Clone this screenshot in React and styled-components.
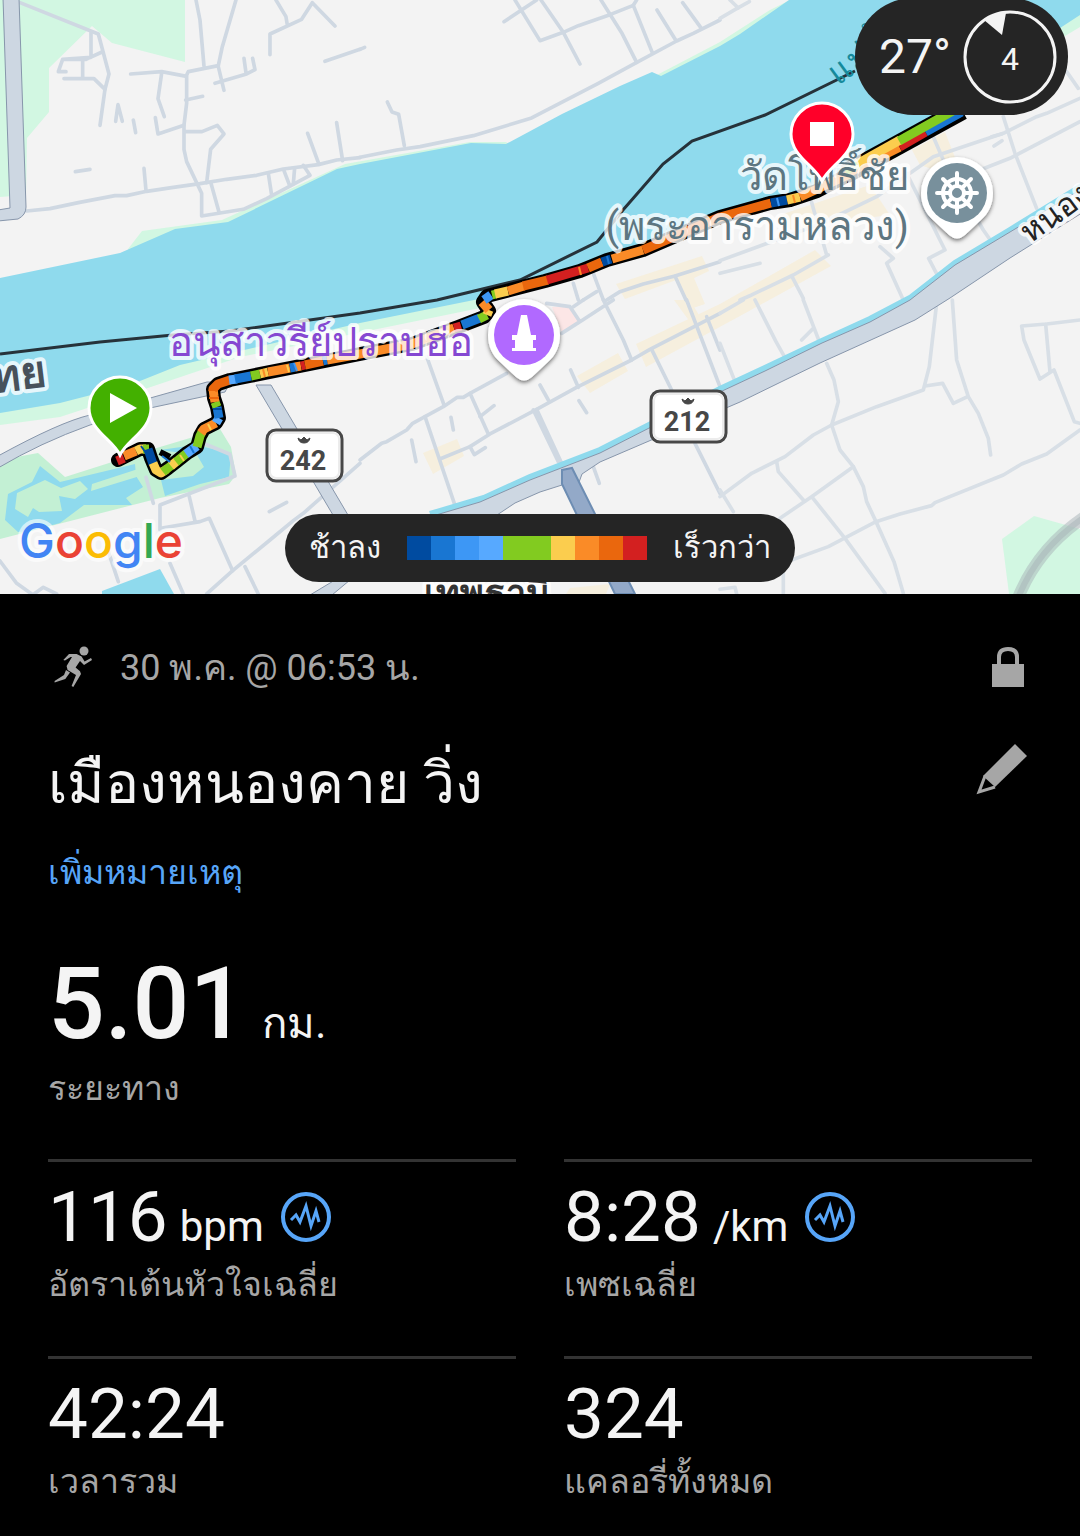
import React from "react";
import styled, { createGlobalStyle } from "styled-components";

const GlobalStyle = createGlobalStyle`
  * {
    box-sizing: border-box;
  }

  body {
    margin: 0;
    background: #000;
    color: #f4f4f4;
    font-family: Roboto, "Noto Sans", sans-serif;
  }
`;

const Screen = styled.main`
  min-height: 100vh;
  background: #000;
`;

const MapArea = styled.section`
  position: relative;
  overflow: hidden;
`;

const MapCanvas = styled.svg`
  display: block;
  width: 100%;
  height: auto;
`;

const Weather = styled.div`
  position: absolute;
  top: -2px;
  right: 12px;
  display: flex;
  align-items: center;
  gap: 12px;
  height: 117px;
  padding: 0 11px 0 24px;
  border-radius: 60px;
  background: #252525;
  font-size: 48px;
`;

const Legend = styled.div`
  position: absolute;
  bottom: 12px;
  left: 50%;
  transform: translateX(-50%);
  display: flex;
  align-items: center;
  gap: 26px;
  height: 68px;
  padding: 0 24px;
  border-radius: 34px;
  background: #252525;
  font-size: 31px;
  line-height: 68px;
  white-space: nowrap;
`;

const Scale = styled.div`
  display: flex;
`;

const Swatch = styled.span`
  width: ${(props) => (props.$wide ? 48 : 24)}px;
  height: 24px;
  background: ${(props) => props.$color};
`;

const Details = styled.section`
  padding: 38px 48px 32px;
`;

const Row = styled.div`
  display: flex;
  align-items: center;
  justify-content: space-between;
`;

const DateLine = styled.div`
  display: flex;
  align-items: center;
  gap: 24px;
  height: 72px;
  color: #a6a6a6;
  font-size: 36px;
  line-height: 48px;
`;

const Title = styled.h1`
  margin: 0;
  padding-top: 28px;
  font-size: 57px;
  line-height: 104px;
  font-weight: 400;
`;

const IconButton = styled.button`
  display: flex;
  padding: 0;
  border: 0;
  background: none;
  color: #a6a6a6;
  cursor: pointer;
`;

const NoteLink = styled.a`
  display: block;
  color: #57a5f8;
  font-size: 34px;
  line-height: 72px;
  text-decoration: none;
`;

const Distance = styled.div`
  display: flex;
  align-items: baseline;
  gap: 16px;
  margin-top: 36px;
  font-size: 100px;
  line-height: 120px;
  font-weight: 500;
`;

const Unit = styled.span`
  font-size: 42px;
  line-height: 48px;
  font-weight: 400;
`;

const Label = styled.div`
  color: #a6a6a6;
  font-size: 34px;
  line-height: 48px;
`;

const Stats = styled.div`
  display: grid;
  grid-template-columns: 1fr 1fr;
  gap: 48px;
  margin-top: 47px;
`;

const Stat = styled.div`
  padding-top: 12px;
  border-top: 3px solid #333;
`;

const StatValue = styled.div`
  display: flex;
  align-items: baseline;
  gap: 12px;
  font-size: 71px;
  line-height: 86px;
`;

const StatButton = styled(IconButton)`
  align-self: center;
  padding-left: 4px;
  color: #57a5f8;
`;

const PACE_COLORS = [
  "#004ba0", "#1976d2", "#3d97f5", "#57a9ff", "#82cb20",
  "#fbcd4e", "#fa8b27", "#ea670d", "#d32020",
];

const STATS = [
  { value: "116", unit: "bpm", label: "อัตราเต้นหัวใจเฉลี่ย", graph: true },
  { value: "8:28", unit: "/km", label: "เพซเฉลี่ย", graph: true },
  { value: "42:24", label: "เวลารวม" },
  { value: "324", label: "แคลอรี่ทั้งหมด" },
];

// side streets, drawn per map tile at three times the screen scale
const TILES = [
  {
    x: 0,
    y: 0,
    roads: [
      "M60 8L295 102L327 222L315 268L300 376",
      "M273 98V172L188 178L175 215H198M248 180V236M192 236H282L315 268M188 178H258L306 156",
      "M392 222L485 215L560 229V310L552 376V448L560 485L605 580V648L730 628L800 596L930 526L910 496",
      "M485 220L474 296L493 350M466 353L474 402L552 376M557 300L608 289",
      "M554 395H606L652 376L672 402L632 448L620 548",
      "M560 225L565 215L655 197L667 140L708 0M588 0L600 60L612 198",
      "M645 250L740 222L765 209L758 175M732 175L738 218M655 200L672 271",
      "M828 0L858 50L862 75M810 164V102L905 58L937 8L1005 78M975 184L1080 148",
      "M80 633L150 626L235 608L345 587L380 587L440 574L520 562L600 551L680 538L770 526L850 507L955 494L1010 480L1080 473",
      "M347 364L354 314L367 364M400 360L407 398M226 515L270 508M432 505L438 571",
      "M633 550L657 636M805 520L815 585M852 512L868 554M884 504L880 552M923 400L956 490M1010 368L1028 482",
    ],
  },
  {
    x: 360,
    y: 0,
    roads: [
      "M0 472L110 450L180 440L340 407L515 354L715 250L825 190L950 123L1000 100L1080 60",
      "M82 306L96 336L116 343L133 437M0 148L14 142",
      "M465 0L540 122L610 97L655 77L750 44L820 16M432 65L530 0M543 0L610 97L660 192",
      "M723 0L785 98L830 187M830 0L820 16L877 158M891 30L947 120M968 8L1022 82",
      "M640 850L655 900M700 820L730 900M670 900L710 875M740 900L780 875L850 852L945 828L1080 785M945 828L978 900",
    ],
  },
  {
    x: 720,
    y: 0,
    roads: [
      "M0 55L50 26L88 5M30 0L55 24M0 782L300 672L470 590L640 470L850 400L950 350L980 340L1080 295",
      "M850 350L885 460L950 625M640 410L670 480L790 690L825 740M480 740L520 775L500 790L550 900",
      "M560 520L675 750L626 775L665 850M780 510L870 475L1080 365M270 590L320 765M0 820L120 790M60 900L95 885L220 825L325 765M215 828L250 895",
      "M1040 215L1075 265M815 410L845 402M822 438L846 422",
    ],
  },
  {
    x: 0,
    y: 300,
    roads: [
      "M438 532L460 610M480 690V615L705 528L690 463L610 430M568 590L585 663M482 685L600 665L628 655L698 812L620 882M735 800L775 882",
      "M1080 490L910 640L880 662L810 720L698 812M0 783L50 850L95 882M102 882L130 862L170 882M510 790L550 882M320 740L355 845M808 635L860 607",
    ],
  },
  {
    x: 360,
    y: 300,
    roads: [
      "M0 480L65 430L80 425L140 390L158 370L195 350L250 320L292 292H310L330 280L440 220",
      "M200 170L252 315M330 280L385 402M195 350L287 622M245 475L330 440L390 402L530 328L650 262L815 180L870 148L1080 40",
      "M530 328L605 490M520 330L595 485M330 440L343 464L376 443M360 350L402 317M273 352L280 390M155 420L168 485M540 255L565 300M632 210L655 262M657 302L680 338",
      "M560 10L630 20L660 65L605 100M730 0L790 120L815 180M875 148L935 270M980 0L1080 260M1040 50L1080 150M660 65L760 0M640 20L670 0M700 500L718 550M1005 430L1080 580",
    ],
  },
  {
    x: 720,
    y: 300,
    roads: [
      "M0 590L95 520L195 470L280 405L335 375L470 320L610 270L628 200L650 10M615 258L668 250L700 310L743 290",
      "M697 0L710 180L745 290L775 340L805 415L812 465M320 190L342 240L355 305L335 375L360 450L400 500L430 560L440 605L468 665L522 785L550 880",
      "M170 485L175 515L250 600M180 655L275 590L400 500M275 590L375 715L495 880M215 780L325 740L468 665L540 642L635 617L645 608L850 525L905 492L980 462L1080 390",
      "M1080 60L980 72L905 78L912 120L960 237L1002 210L1063 365L1080 370M977 72L990 215M105 0L168 125L200 182M250 0L300 130M245 120L280 85M0 130L45 245M0 40L70 0M0 570L40 635M190 820V882M0 868L45 862L50 882M550 0V12",
    ],
  },
];

const ROUTE =
  "M118 460L132 453L140 449L148 449L151 458L156 470L161 473L168 468L177 461L187 453L197 447L200 436L204 429L216 423L219 418L217 407L214 398L213 389L218 384L230 380L250 376L300 366L360 354L412 344L458 327L484 317L489 311L483 302L487 296L545 281L580 271L607 260L643 250L720 217L770 203L790 200L817 191L850 174";

const ROUTE_PARTS = [
  ["#d32020", "M117 461L124 458"],
  ["#fa8b27", "M124 456L136 451"],
  ["#fbcd4e", "M136 451L140 449L146 449"],
  ["#82cb20", "M143 449H149"],
  ["#004ba0", "M148 449L151 458L153 464"],
  ["#fbcd4e", "M153 463L156 470L161 473L167 469"],
  ["#82cb20", "M163 472L168 468L172 465"],
  ["#fbcd4e", "M171 466L177 461"],
  ["#82cb20", "M176 462L187 453"],
  ["#57a9ff", "M186 454L197 446"],
  ["#82cb20", "M197 447L200 436L202 432"],
  ["#fa8b27", "M201 433L204 429L216 423"],
  ["#57a9ff", "M216 423L219 418"],
  ["#1976d2", "M219 418L217 407"],
  ["#82cb20", "M217 407L215 402"],
  ["#fa8b27", "M215 402L214 396L213 389"],
  ["#ea670d", "M213 391L213 389L218 384L230 380"],
  ["#57a9ff", "M229 380L237 379"],
  ["#1976d2", "M235 379L251 376"],
  ["#82cb20", "M251 376L260 374"],
  ["#fbcd4e", "M260 374L268 372"],
  ["#fa8b27", "M268 372L290 368"],
  ["#1976d2", "M290 368L295 367"],
  ["#fa8b27", "M295 367L301 366"],
  ["#d32020", "M301 366L305 365"],
  ["#ea670d", "M305 365L323 361"],
  ["#1976d2", "M323 361L327 360"],
  ["#fa8b27", "M327 360L360 354L412 344L454 328"],
  ["#d32020", "M454 328L461 326"],
  ["#1976d2", "M462 325L480 318"],
  ["#82cb20", "M479 319L487 315"],
  ["#fbcd4e", "M487 315L489 310"],
  ["#fa8b27", "M489 310L482 302"],
  ["#3d97f5", "M484 300L491 295"],
  ["#82cb20", "M492 295L496 294"],
  ["#fbcd4e", "M495 294L508 291"],
  ["#fa8b27", "M508 291L524 286"],
  ["#ea670d", "M523 286L548 280"],
  ["#d32020", "M547 280L588 268"],
  ["#ea670d", "M588 268L602 262"],
  ["#004ba0", "M602 262L611 259"],
  ["#fa8b27", "M612 259L643 250"],
  ["#ea670d", "M643 250L720 217L771 203"],
  ["#004ba0", "M771 203L787 200"],
  ["#fbcd4e", "M787 200L800 197"],
  ["#fa8b27", "M800 197L850 174"],
];

// out and back lanes side by side near the turning point
const RETURN_PARTS = [
  ["#fa8b27", "M848 174L900 148", 7],
  ["#d32020", "M900 148L926 133", 7],
  ["#1976d2", "M926 133L962 113", 7],
  ["#82cb20", "M845 171L860 163", 9],
  ["#fbcd4e", "M857 164L900 140", 9],
  ["#82cb20", "M899 141L958 108", 9],
];

// small hard marks along the route where the pace flips for a moment
const ROUTE_TICKS = [
  ["#1976d2", "M162 456L170 462"], ["#fbcd4e", "M180 455L184 461"],
  ["#004ba0", "M141 446L146 453"], ["#1976d2", "M190 446L194 453"],
  ["#004ba0", "M213 409L222 409"], ["#ea670d", "M209 398L219 398"],
  ["#fa8b27", "M263 369L265 377"], ["#fbcd4e", "M287 365L289 372"],
  ["#3d97f5", "M294 363L297 371"], ["#1976d2", "M607 256L609 264"],
  ["#fa8b27", "M579 267L581 275"], ["#fbcd4e", "M208 424L211 430"],
  ["#3d97f5", "M777 198L779 206"], ["#fa8b27", "M793 195L795 203"],
];

const MAP_LABELS = [
  { text: "อนุสาวรีย์ปราบฮ่อ", x: 321, y: 356, size: 40, color: "#8548d2", anchor: "middle" },
  { text: "วัดโพธิ์ชัย", x: 909, y: 190, size: 40, color: "#5d7681", anchor: "end" },
  { text: "(พระอารามหลวง)", x: 909, y: 240, size: 40, color: "#5d7681", anchor: "end" },
];

function MapLabel({ text, x, y, size, color, anchor = "start", weight = 400, rotate = 0 }) {
  return (
    <text
      x={x}
      y={y}
      fill={color}
      stroke="#fff"
      strokeOpacity="0.8"
      strokeWidth="8"
      strokeLinejoin="round"
      paintOrder="stroke"
      fontSize={size}
      fontWeight={weight}
      textAnchor={anchor}
      transform={`rotate(${rotate} ${x} ${y})`}
    >
      {text}
    </text>
  );
}

function RoadShield({ x, y, number }) {
  return (
    <g transform={`translate(${x} ${y})`}>
      <rect x="2" y="1" width="75" height="51" rx="9" fill="#fff" stroke="#474747" strokeWidth="3" />
      <rect x="5" y="4" width="69" height="45" rx="6" fill="none" stroke="#ececec" strokeWidth="2" />
      <path d="M33 9Q34 14 39 14T45 9L42 11L39 8L36 11Z" fill="#474747" stroke="#474747" />
      <text x="38" y="41" fill="#474747" fontSize="27" fontWeight="700" textAnchor="middle">
        {number}
      </text>
    </g>
  );
}

function PlacePin({ x, y, color, children }) {
  return (
    <g transform={`translate(${x} ${y})`}>
      <path
        d="M-36 0A36 36 0 1 1 36 0C36 12 31 21 24 27L8 42Q0 49 -8 42L-24 27C-31 21 -36 12 -36 0Z"
        fill="#fff"
        filter="url(#pinShadow)"
      />
      <circle r="30" fill={color} />
      {children}
    </g>
  );
}

function RoutePin({ x, y, color, children }) {
  return (
    <g transform={`translate(${x} ${y})`}>
      <path
        d="M0 47C-7 32 -31 22 -31 0A31 31 0 0 1 31 0C31 22 7 32 0 47Z"
        fill={color}
        stroke="#fff"
        strokeWidth="3"
      />
      {children}
    </g>
  );
}

function RouteMap() {
  return (
    <MapCanvas viewBox="0 0 1080 594" role="img" aria-label="แผนที่เส้นทางวิ่ง">
      <defs>
        <filter id="pinShadow" x="-30%" y="-30%" width="160%" height="160%">
          <feDropShadow dx="0" dy="2" stdDeviation="2" floodOpacity="0.55" />
        </filter>
      </defs>
      <rect width="1080" height="594" fill="#f3f3f3" />
      <path d="M0 0H185V62L112 43L92 26L49 68V112L27 138L26 195L0 197Z" fill="#d2f7e2" />
      <path d="M128 249L142 231L222 220L345 164L470 142H506L512 146L130 260ZM655 76L720 42L770 10L790 0V30L661 80ZM1000 70L1080 12V27L1000 75ZM0 405V425L60 417L130 394L240 357L485 307V290L300 330Z" fill="#d2f7e2" />
      <path d="M0 278L120 253L175 229L228 222L337 169L360 164L471 143L506 144L562 114L620 86L652 72L661 76L720 46L740 34L789 0H1080V15L965 90V108L860 164L817 186L720 217L600 258L484 298L360 323L180 365L130 385L60 403L0 413Z" fill="#8fdaed" />

      {/* park and its ponds */}
      <path d="M0 460L38 453L65 477L150 450L220 429L231 447L236 475L229 484L160 498L0 539Z" fill="#c3f0d4" />
      <path d="M5 520L8 494L32 482L40 466L60 482L135 464L136 476L143 487L126 498L132 505H84L60 523L30 531L18 532Z" fill="#8fdaed" />
      <path d="M15 509L17 493L45 480L61 488L80 481L88 489L75 499L59 496L62 511L39 512L33 508L28 517ZM91 491L92 484L138 469L140 476Z" fill="#c3f0d4" />
      <path d="M160 450L195 445L231 453L229 477L200 484L165 496L161 480L193 476L204 467L197 455Z" fill="#8fdaed" />
      <path d="M102 591L160 569L174 594H102Z" fill="#8fdaed" />
      <path d="M1002 539L1034 516L1080 529V594H1009Z" fill="#d2f7e2" />
      <path d="M1018 598Q1038 548 1086 516" fill="none" stroke="#a8b3b8" strokeWidth="12" strokeOpacity="0.5" />
      <path d="M1018 598Q1038 548 1086 516" fill="none" stroke="#a8b3b8" strokeWidth="6" strokeOpacity="0.5" />

      {/* built-up blocks */}
      <path d="M616 284L702 256L709 271L694 278L705 304L690 309L676 280L625 299ZM636 344L720 304L815 250L831 266L740 316L646 367ZM577 376L618 353L628 371L590 393ZM423 453L457 439L464 456L433 474ZM674 300H690L705 325L698 333ZM780 215L870 185L890 215L850 220L790 230ZM912 150L945 132L956 160L935 170L920 165ZM570 588L610 584L606 594H566Z" fill="#f6efde" />
      <path d="M552 307L568 306L580 321L562 333Z" fill="#fce6e6" />

      {TILES.map((tile) => (
        <g
          key={`${tile.x}-${tile.y}`}
          transform={`translate(${tile.x} ${tile.y}) scale(0.3333)`}
          fill="none"
          stroke={tile.x === 720 ? "#d8dfe6" : "#cfd8e2"}
          strokeWidth="11"
          strokeLinecap="round"
          strokeLinejoin="round"
        >
          {tile.roads.map((road) => (
            <path key={road} d={road} />
          ))}
        </g>
      ))}

      {/* main roads */}
      <path d="M430 514L484 498L530 477L600 450L720 389L765 368L822 341L870 319L910 298L955 263L1010 230L1085 184" fill="none" stroke="#8fdaed" strokeWidth="6" />
      <g stroke="#8796ab" strokeWidth="1" fill="#cdd7e2">
        <path d="M3 -2L10 208L-2 210V221L18 219Q26 215 26 207L19 -2Z" />
        <path d="M-2 456Q60 422 90 415L207 382H230L225 392L150 408L90 425Q40 443 -2 468Z" />
        <path d="M256 385H271L348 515H333Z" />
        <path d="M436 515L480 502L530 480L600 453L720 392L765 371L822 343L870 322L910 300L955 265L1010 232L1085 187V211L1010 258L950 298L915 320L820 363L785 380L740 402L600 462L582 474L578 485H562L540 492L515 503L497 515Z" />
        <path d="M310 595L335 580H350L332 595Z" />
      </g>
      <path d="M562 470L572 468L635 594H615L562 484Z" fill="#93a9c8" stroke="#6d8db3" strokeWidth="2" />

      <path d="M0 354L100 342L173 335L230 331L360 313L437 300L520 280L597 242L623 210L663 164L692 141L765 115L855 71" fill="none" stroke="#26323a" strokeWidth="3" />

      <g fill="none" strokeLinejoin="round" strokeLinecap="butt">
        <path d={ROUTE} stroke="#000" strokeWidth="14" strokeLinecap="round" />
        <path d="M160 452L170 457" stroke="#000" strokeWidth="6" />
        <path d="M845 174L962 110" stroke="#000" strokeWidth="20" />
        {ROUTE_PARTS.map(([color, d]) => (
          <path key={d} d={d} stroke={color} strokeWidth="9" />
        ))}
        {RETURN_PARTS.map(([color, d, width]) => (
          <path key={d} d={d} stroke={color} strokeWidth={width} />
        ))}
        {ROUTE_TICKS.map(([color, d]) => (
          <path key={d} d={d} stroke={color} strokeWidth="2" />
        ))}
      </g>

      {MAP_LABELS.map((label) => (
        <MapLabel key={label.text} {...label} />
      ))}
      <text x="838" y="86" fill="#168a9b" fontSize="34" transform="rotate(-36 838 86)">แม่น้ำ</text>
      <MapLabel text="ไทย" x={48} y={386} size={44} color="#47515b" anchor="end" weight={700} rotate={-7} />
      <MapLabel text="หนองคาย" x={1030} y={244} size={32} color="#222" rotate={-36} />
      <MapLabel text="เทพธานี" x={487} y={605} size={36} color="#333" anchor="middle" weight={700} />

      <RoadShield x={265} y={429} number="242" />
      <RoadShield x={649} y={390} number="212" />

      <PlacePin x={524} y={335} color="#b169ff">
        <path d="M-3 -20H3L7 0H12V5H9V13H12V16H-12V13H-9V5H-12V0H-7Z" fill="#fff" />
      </PlacePin>
      <PlacePin x={957} y={193} color="#78909c">
        <g fill="none" stroke="#fff" strokeWidth="4" strokeLinecap="round">
          <circle r="14" />
          <circle r="7" />
          <path d="M0 -20V-8M0 20V8M-20 0H-8M20 0H8M-14 -14L-5 -5M14 14L5 5M14 -14L5 -5M-14 14L-5 5" />
        </g>
      </PlacePin>

      <RoutePin x={822} y={134} color="#ff0029">
        <rect x="-12" y="-12" width="24" height="24" fill="#fff" />
      </RoutePin>
      <RoutePin x={120} y={408} color="#43b000">
        <path d="M-10 -15L17 0L-10 15Z" fill="#fff" />
      </RoutePin>

      <text
        x="19"
        y="558"
        fontFamily="Inter, sans-serif"
        fontSize="48"
        fontWeight="500"
        stroke="#fff"
        strokeOpacity="0.6"
        strokeWidth="8"
        paintOrder="stroke"
        strokeLinejoin="round"
      >
        <tspan fill="#4285f4">G</tspan>
        <tspan fill="#ea4335">o</tspan>
        <tspan fill="#fbbc04">o</tspan>
        <tspan fill="#4285f4">g</tspan>
        <tspan fill="#34a853">l</tspan>
        <tspan fill="#ea4335">e</tspan>
      </text>
    </MapCanvas>
  );
}

function WindDial() {
  return (
    <svg width="94" height="94" viewBox="0 0 94 94" role="img" aria-label="ลม 4">
      <circle cx="47" cy="47" r="45" fill="none" stroke="#f4f4f4" strokeWidth="3" />
      <path d="M21 10Q31 4 43 3L39 25Z" fill="#f4f4f4" />
      <text x="47" y="60" fill="#f4f4f4" fontSize="32" textAnchor="middle">4</text>
    </svg>
  );
}

function RunnerIcon() {
  return (
    <svg width="48" height="48" viewBox="0 0 48 48" fill="#a6a6a6" aria-hidden="true">
      <circle cx="36" cy="7" r="4.5" />
      <path d="M21 10H28.6L33.6 12.6L36.6 17.6L43 14L44 16L36 21L32 17L27.6 23.6L32 27.3L33 30L25.3 43L23.6 42L28 31L19.6 26L18.6 22L24 13H22.6L17 16.6L15.3 16Z" />
      <path d="M18 26L22 28.6L17.3 35L6.6 38.6V37L16 31Z" />
    </svg>
  );
}

function LockIcon() {
  return (
    <svg width="48" height="48" viewBox="0 0 48 48" aria-hidden="true">
      <path d="M15 21V13Q15 5 24 5T33 13V21" fill="none" stroke="currentColor" strokeWidth="4" />
      <rect x="8" y="20" width="32" height="23" fill="currentColor" />
    </svg>
  );
}

function PencilIcon() {
  return (
    <svg width="60" height="60" viewBox="0 0 60 60" aria-hidden="true">
      <path d="M43 4L55 16L23 47L11 36Z" fill="currentColor" />
      <path d="M13 36L7 52L23 47" fill="none" stroke="currentColor" strokeWidth="3" />
    </svg>
  );
}

function GraphIcon() {
  return (
    <svg width="52" height="52" viewBox="0 0 52 52" fill="none" stroke="currentColor" aria-hidden="true">
      <circle cx="26" cy="26" r="23" strokeWidth="4" />
      <path d="M11 29L16 24L20 31L26 15L31 35L36 20L39 31" strokeWidth="3" />
    </svg>
  );
}

const App = () => {
  return (
    <>
      <GlobalStyle />
      <Screen>
        <MapArea>
          <RouteMap />
          <Weather>
            <span>27°</span>
            <WindDial />
          </Weather>
          <Legend>
            <span>ช้าลง</span>
            <Scale>
              {PACE_COLORS.map((color, i) => (
                <Swatch key={color} $color={color} $wide={i === 4} />
              ))}
            </Scale>
            <span>เร็วกว่า</span>
          </Legend>
        </MapArea>

        <Details>
          <Row>
            <DateLine>
              <RunnerIcon />
              <span>30 พ.ค. @ 06:53 น.</span>
            </DateLine>
            <IconButton aria-label="ความเป็นส่วนตัว">
              <LockIcon />
            </IconButton>
          </Row>
          <Row>
            <Title>เมืองหนองคาย วิ่ง</Title>
            <IconButton aria-label="แก้ไขชื่อ">
              <PencilIcon />
            </IconButton>
          </Row>
          <NoteLink href="#note">เพิ่มหมายเหตุ</NoteLink>

          <Distance>
            5.01 <Unit>กม.</Unit>
          </Distance>
          <Label>ระยะทาง</Label>

          <Stats>
            {STATS.map((stat) => (
              <Stat key={stat.label}>
                <StatValue>
                  {stat.value}
                  {stat.unit && <Unit>{stat.unit}</Unit>}
                  {stat.graph && (
                    <StatButton aria-label={`กราฟ ${stat.label}`}>
                      <GraphIcon />
                    </StatButton>
                  )}
                </StatValue>
                <Label>{stat.label}</Label>
              </Stat>
            ))}
          </Stats>
        </Details>
      </Screen>
    </>
  );
};

export default App;
